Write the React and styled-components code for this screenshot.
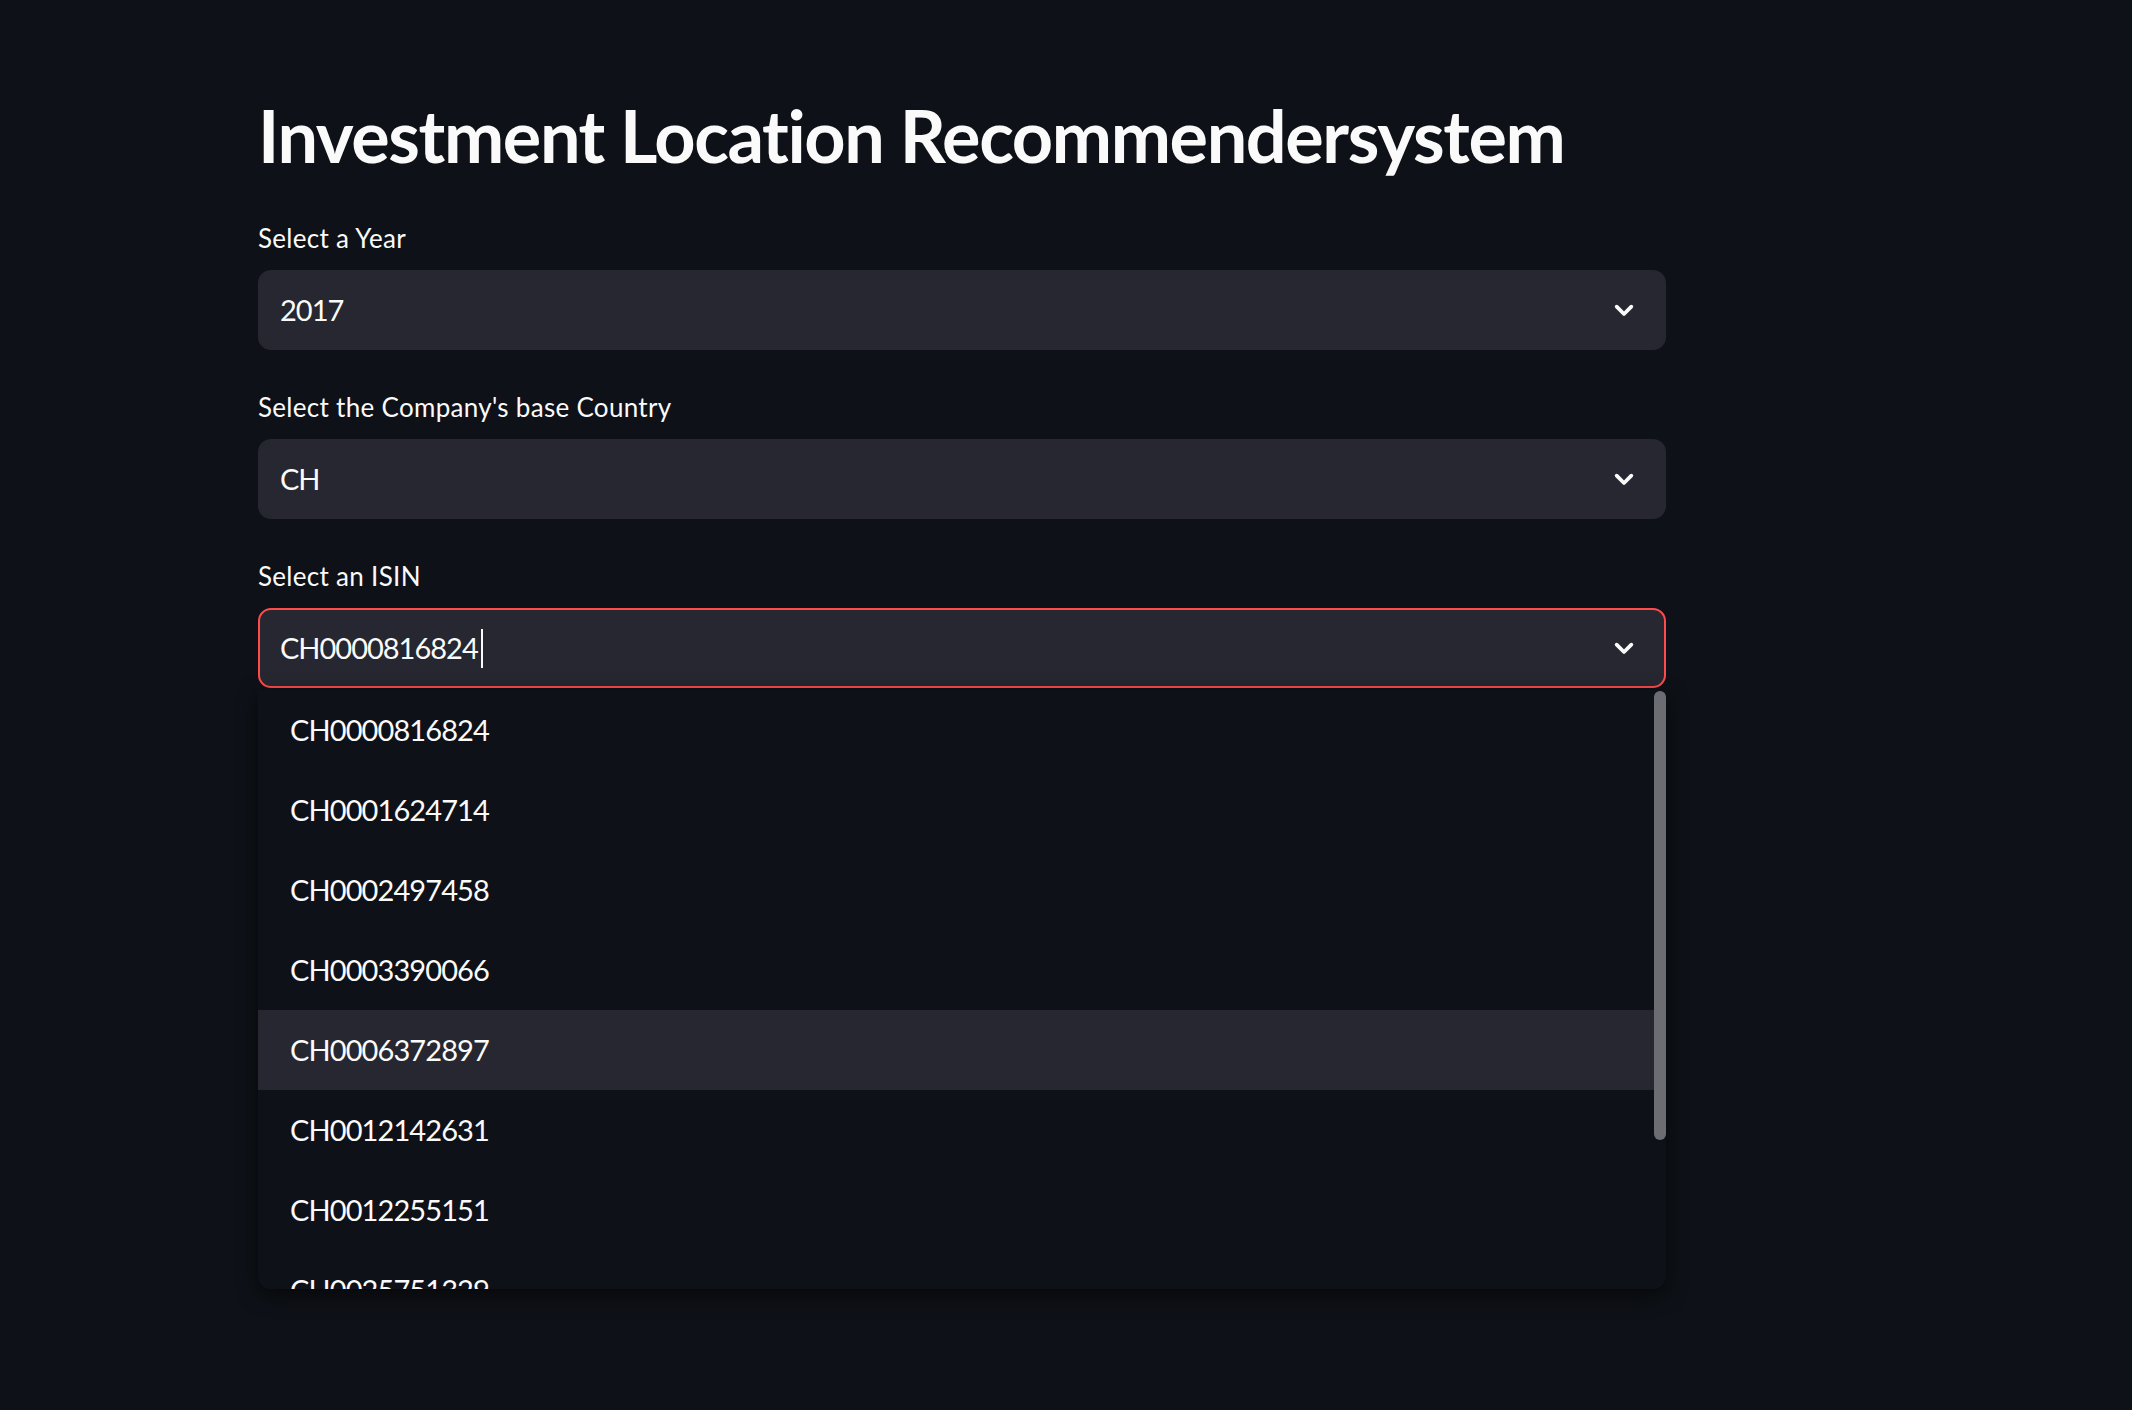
import React from "react";
import styled, { createGlobalStyle } from "styled-components";

const GlobalStyle = createGlobalStyle`
  html, body {
    margin: 0;
    padding: 0;
    background: #0e1117;
  }
  body {
    font-family: Lato, "Noto Sans", sans-serif;
    color: #fafafa;
    min-height: 1410px;
  }
`;

const years = ["2017"];
const isins = [
  "CH0000816824",
  "CH0001624714",
  "CH0002497458",
  "CH0003390066",
  "CH0006372897",
  "CH0012142631",
  "CH0012255151",
  "CH0025751329",
];

const Chevron = () => (
  <svg width="32" height="32" viewBox="0 0 24 24" fill="none">
    <path
      d="M6.5 9.5L12 15l5.5-5.5"
      stroke="#fafafa"
      strokeWidth="2.8"
      strokeLinecap="round"
      strokeLinejoin="round"
    />
  </svg>
);

const App = () => {
  return (
    <>
      <GlobalStyle />
      <Main>
        <Title>Investment Location Recommendersystem</Title>
        <Field>
          <Label>Select a Year</Label>
          <SelectBox>
            <Value>{years[0]}</Value>
            <Chevron />
          </SelectBox>
        </Field>
        <Field>
          <Label>Select the Company's base Country</Label>
          <SelectBox>
            <Value>CH</Value>
            <Chevron />
          </SelectBox>
        </Field>
        <Field>
          <Label>Select an ISIN</Label>
          <SelectBox focused>
            <Value>
              {isins[0]}
              <Caret />
            </Value>
            <Chevron />
          </SelectBox>
          <Menu>
            {isins.map((isin, i) => (
              <Option key={isin} active={i === 4}>
                {isin}
              </Option>
            ))}
            <Scrollbar />
          </Menu>
        </Field>
      </Main>
    </>
  );
};

const Main = styled.main`
  width: 1408px;
  margin-left: 258px;
  padding-top: 92px;
  display: flex;
  flex-direction: column;
`;

const Title = styled.h1`
  margin: 0 0 45px;
  font-size: 72px;
  font-weight: 700;
  line-height: 1.2;
  letter-spacing: -1.4px;
  color: #fafafa;
`;

const Field = styled.div`
  position: relative;
  display: flex;
  flex-direction: column;
  gap: 17px;
  margin-bottom: 42px;
`;

const Label = styled.label`
  font-size: 26px;
  line-height: 30px;
  letter-spacing: 0.3px;
  color: #fafafa;
`;

const SelectBox = styled.div`
  box-sizing: border-box;
  height: 80px;
  display: flex;
  align-items: center;
  justify-content: space-between;
  padding: 0 24px 0 20px;
  background: #262730;
  border: 2px solid ${({ focused }) => (focused ? "#ff4b4b" : "#262730")};
  border-radius: 13px;
`;

const Value = styled.div`
  display: flex;
  align-items: center;
  font-size: 29px;
  line-height: 1.2;
  letter-spacing: -1px;
  color: #fafafa;
`;

const Caret = styled.span`
  display: inline-block;
  width: 2px;
  height: 39px;
  margin-left: 3px;
  background: #fafafa;
`;

const Menu = styled.ul`
  position: absolute;
  top: calc(100% + 2px);
  left: 0;
  right: 0;
  height: 599px;
  margin: 0;
  padding: 0;
  list-style: none;
  overflow: hidden;
  background: #0e1117;
  border-radius: 0 0 13px 13px;
  box-shadow: 0 6px 20px rgba(0, 0, 0, 0.55);
  z-index: 10;
`;

const Option = styled.li`
  box-sizing: border-box;
  height: 80px;
  display: flex;
  align-items: center;
  padding-left: 32px;
  margin-right: 12px;
  font-size: 29px;
  line-height: 1.2;
  letter-spacing: -0.9px;
  color: #fafafa;
  background: ${({ active }) => (active ? "#262730" : "transparent")};
`;

const Scrollbar = styled.div`
  position: absolute;
  top: 1px;
  right: 0;
  width: 12px;
  height: 449px;
  border-radius: 6px;
  background: #6c6d73;
`;

export default App;
